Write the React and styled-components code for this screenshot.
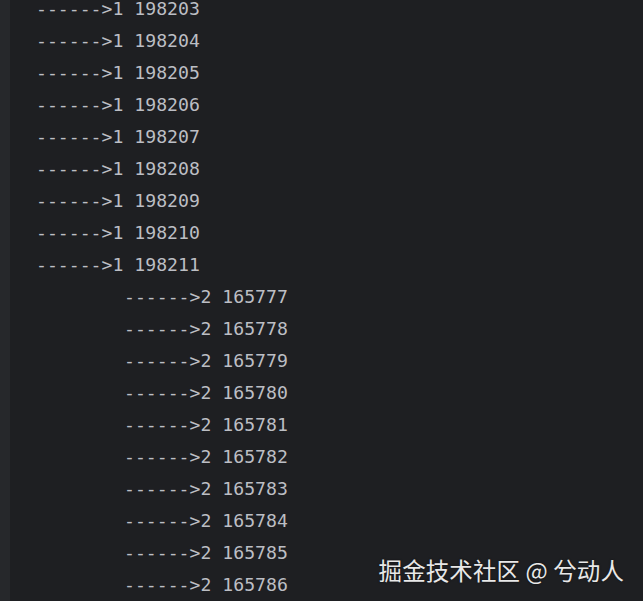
import React from 'react';
import styled, { createGlobalStyle } from 'styled-components';

const GlobalStyle = createGlobalStyle`
  html, body {
    margin: 0;
    padding: 0;
    background: #1e1f22;
    overflow: hidden;
  }
`;

const Screen = styled.div`
  position: relative;
  display: flex;
  width: 643px;
  height: 601px;
  background: #1e1f22;
  overflow: hidden;
`;

const Gutter = styled.div`
  width: 10px;
  flex-shrink: 0;
  background: #26282b;
`;

const Console = styled.div`
  display: flex;
  flex-direction: column;
  margin-top: -7px;
  padding-left: 26px;
  font-family: 'DejaVu Sans Mono', 'Liberation Mono', monospace;
  font-size: 18.15px;
  line-height: 32px;
  color: #bcbec4;
  white-space: pre;
`;

const Line = styled.div`
  padding-left: ${props => props.level * 88}px;
  height: 32px;
`;

const Watermark = styled.div`
  position: absolute;
  right: 19px;
  bottom: 16px;
  font-family: 'Noto Sans CJK SC', 'Noto Sans', sans-serif;
  font-size: 23.5px;
  letter-spacing: 0.1px;
  line-height: 30px;
  color: #e8e8e8;
  text-shadow: 0 0 2px rgba(0, 0, 0, 0.6);
`;

const lines = [
  ...[198203, 198204, 198205, 198206, 198207, 198208, 198209, 198210, 198211].map(n => ({
    level: 0,
    text: `------>1 ${n}`,
  })),
  ...[165777, 165778, 165779, 165780, 165781, 165782, 165783, 165784, 165785, 165786].map(n => ({
    level: 1,
    text: `------>2 ${n}`,
  })),
];

export default function App() {
  return (
    <>
      <GlobalStyle />
      <Screen>
        <Gutter />
        <Console>
          {lines.map((l, i) => (
            <Line key={i} level={l.level}>
              {l.text}
            </Line>
          ))}
        </Console>
        <Watermark>掘金技术社区 @ 兮动人</Watermark>
      </Screen>
    </>
  );
}
